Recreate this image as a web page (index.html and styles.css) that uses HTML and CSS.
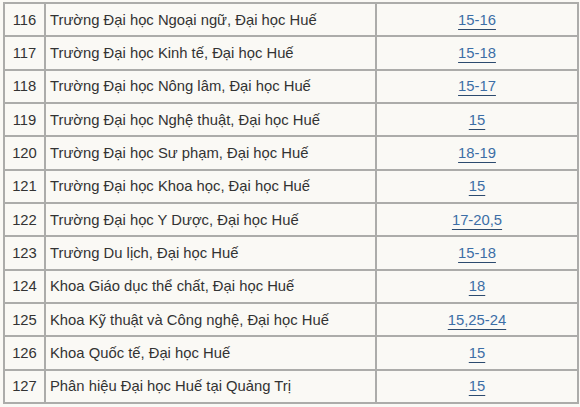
FILE: index.html
```html
<!DOCTYPE html>
<html lang="vi">
<head>
<meta charset="utf-8">
<link rel="stylesheet" href="styles.css">
</head>
<body>
<table class="list">
  <colgroup><col class="c-no"><col class="c-name"><col class="c-score"></colgroup>
  <tr><td class="no">116</td><td class="name">Trường Đại học Ngoại ngữ, Đại học Huế</td><td class="score"><a href="#">15-16</a></td></tr>
  <tr><td class="no">117</td><td class="name">Trường Đại học Kinh tế, Đại học Huế</td><td class="score"><a href="#">15-18</a></td></tr>
  <tr><td class="no">118</td><td class="name">Trường Đại học Nông lâm, Đại học Huế</td><td class="score"><a href="#">15-17</a></td></tr>
  <tr><td class="no">119</td><td class="name">Trường Đại học Nghệ thuật, Đại học Huế</td><td class="score"><a href="#">15</a></td></tr>
  <tr><td class="no">120</td><td class="name">Trường Đại học Sư phạm, Đại học Huế</td><td class="score"><a href="#">18-19</a></td></tr>
  <tr><td class="no">121</td><td class="name">Trường Đại học Khoa học, Đại học Huế</td><td class="score"><a href="#">15</a></td></tr>
  <tr><td class="no">122</td><td class="name">Trường Đại học Y Dược, Đại học Huế</td><td class="score"><a href="#">17-20,5</a></td></tr>
  <tr><td class="no">123</td><td class="name">Trường Du lịch, Đại học Huế</td><td class="score"><a href="#">15-18</a></td></tr>
  <tr><td class="no">124</td><td class="name">Khoa Giáo dục thể chất, Đại học Huế</td><td class="score"><a href="#">18</a></td></tr>
  <tr><td class="no">125</td><td class="name">Khoa Kỹ thuật và Công nghệ, Đại học Huế</td><td class="score"><a href="#">15,25-24</a></td></tr>
  <tr><td class="no">126</td><td class="name">Khoa Quốc tế, Đại học Huế</td><td class="score"><a href="#">15</a></td></tr>
  <tr><td class="no">127</td><td class="name">Phân hiệu Đại học Huế tại Quảng Trị</td><td class="score"><a href="#">15</a></td></tr>
</table>
</body>
</html>
```
FILE: styles.css
```css
html, body {
  margin: 0;
  padding: 0;
  background: #faf9f5;
}
body {
  font-family: "Liberation Sans", Arial, sans-serif;
  font-size: 14.8px;
  color: #333;
  overflow: hidden;
}
.list {
  border-collapse: collapse;
  margin: 2px 0 0 3px;
  width: 574px;
  table-layout: fixed;
}
.c-no { width: 41px; }
.c-name { width: 331px; }
.c-score { width: 202px; }
.list tr { height: 33.33px; }
.list td {
  border: 2px solid #acacaa;
  padding: 0 4px;
  vertical-align: middle;
}
.list td.no { text-align: center; padding: 0; }
.list td.score { text-align: center; }
.score a {
  color: #3c6ea6;
  text-decoration: underline;
  text-decoration-color: #2c4a6e;
  text-underline-offset: 4px;
  text-decoration-thickness: 1px;
}
```
